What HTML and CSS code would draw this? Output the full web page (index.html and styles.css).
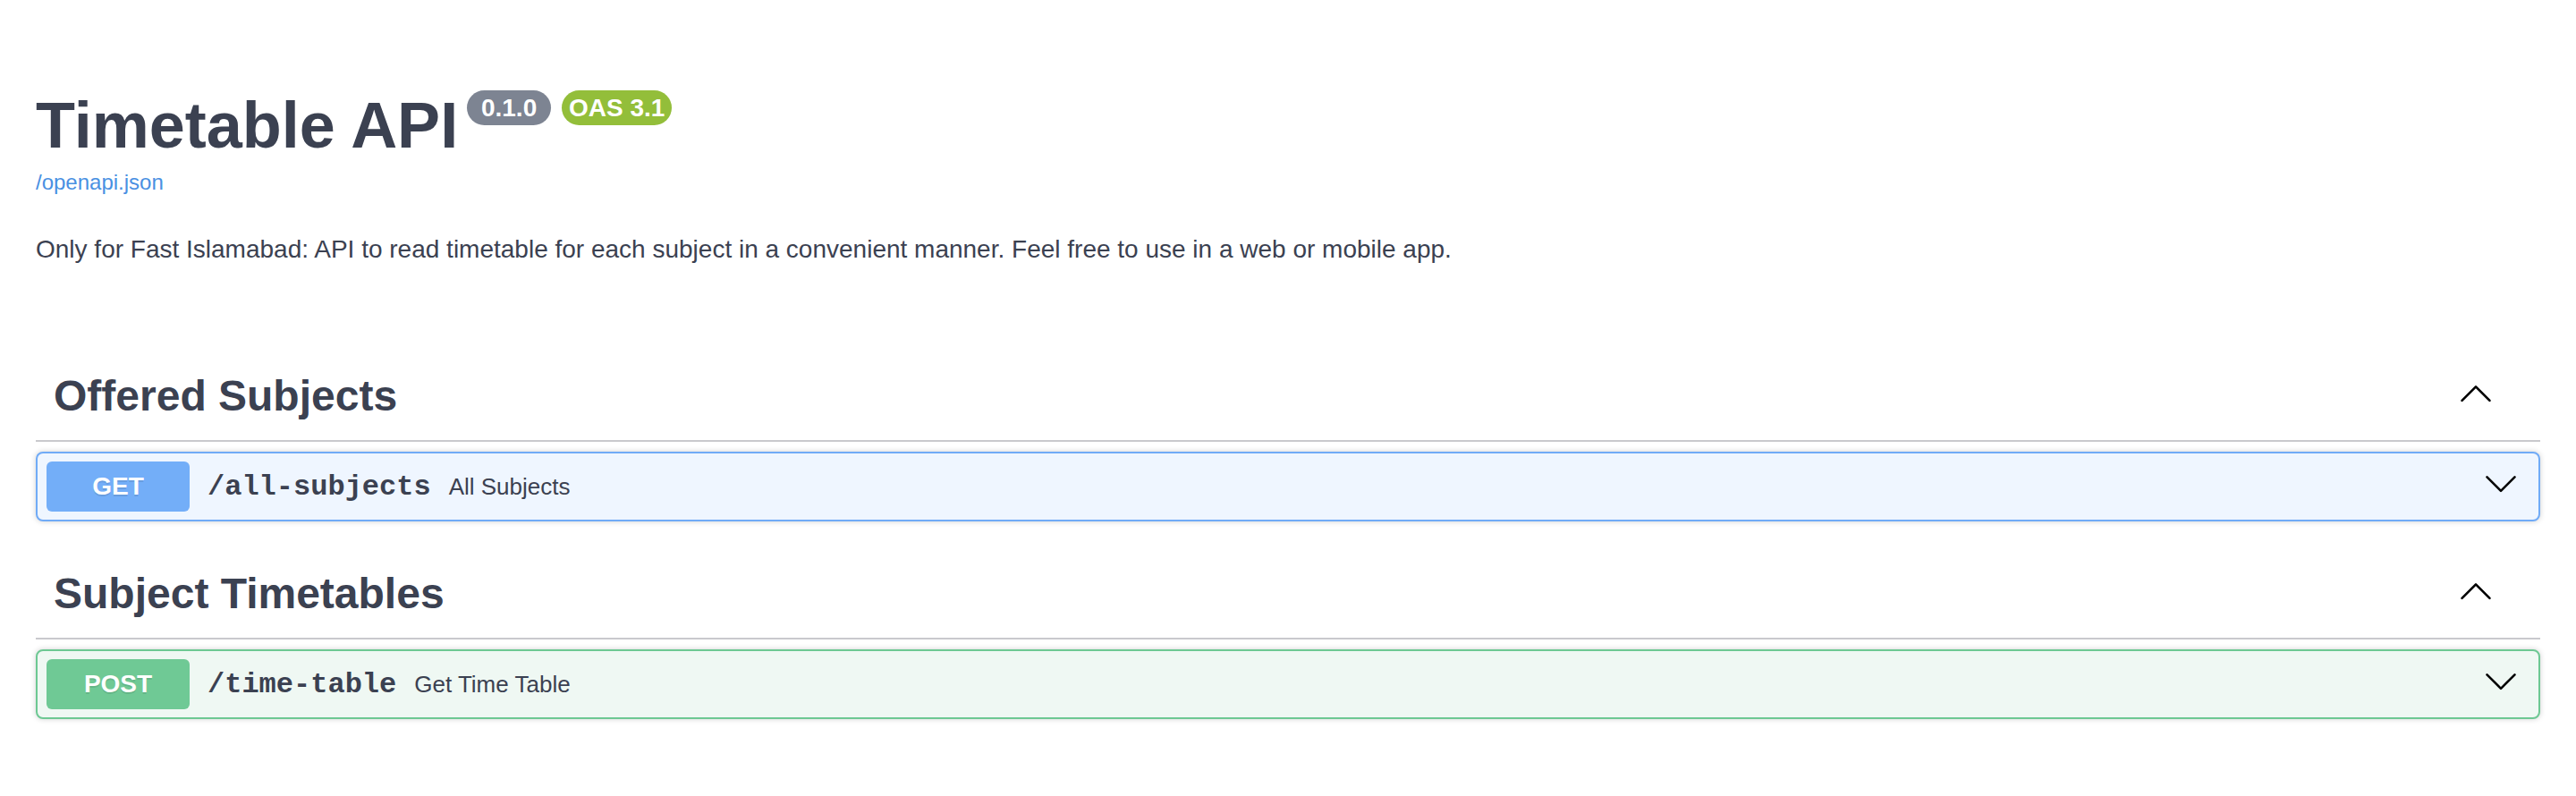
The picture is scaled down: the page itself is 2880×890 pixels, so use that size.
FILE: index.html
```html
<!DOCTYPE html>
<html lang="en">
<head>
<meta charset="utf-8">
<title>Timetable API - Swagger UI</title>
<link rel="stylesheet" href="styles.css">
</head>
<body>
<div class="wrapper">
  <section class="info">
    <hgroup class="main">
      <h2 class="title">
        <span class="title-text">Timetable API</span>
        <span class="stamp stamp-version"> 0.1.0 </span>
        <span class="stamp stamp-oas">OAS 3.1</span>
      </h2>
      <a class="url" href="#">/openapi.json</a>
    </hgroup>
    <div class="description">
      <p>Only for Fast Islamabad: API to read timetable for each subject in a convenient manner. Feel free to use in a web or mobile app.</p>
    </div>
  </section>

  <section class="tag-section">
    <div class="tag-header">
      <h3 class="tag-name">Offered Subjects</h3>
      <button class="expand" type="button" aria-label="collapse">
        <svg class="arrow" width="40" height="40" viewBox="0 0 20 20" aria-hidden="true"><polyline points="2.25,13.9 10,6.15 17.75,13.9"/></svg>
      </button>
    </div>
    <div class="opblock opblock-get">
      <div class="summary">
        <span class="method">GET</span>
        <span class="path">/all-subjects</span>
        <span class="summary-desc">All Subjects</span>
        <button class="control" type="button" aria-label="expand">
          <svg class="arrow" width="40" height="40" viewBox="0 0 20 20" aria-hidden="true"><polyline points="2.25,6.15 10,13.9 17.75,6.15"/></svg>
        </button>
      </div>
    </div>
  </section>

  <section class="tag-section">
    <div class="tag-header">
      <h3 class="tag-name">Subject Timetables</h3>
      <button class="expand" type="button" aria-label="collapse">
        <svg class="arrow" width="40" height="40" viewBox="0 0 20 20" aria-hidden="true"><polyline points="2.25,13.9 10,6.15 17.75,13.9"/></svg>
      </button>
    </div>
    <div class="opblock opblock-post">
      <div class="summary">
        <span class="method">POST</span>
        <span class="path">/time-table</span>
        <span class="summary-desc">Get Time Table</span>
        <button class="control" type="button" aria-label="expand">
          <svg class="arrow" width="40" height="40" viewBox="0 0 20 20" aria-hidden="true"><polyline points="2.25,6.15 10,13.9 17.75,6.15"/></svg>
        </button>
      </div>
    </div>
  </section>
</div>
</body>
</html>
```

FILE: styles.css
```css
html, body {
  margin: 0;
  padding: 0;
  background: #ffffff;
}

body {
  font-family: "Liberation Sans", Arial, sans-serif;
  color: #3b4151;
}

.wrapper {
  max-width: 2920px;
  box-sizing: border-box;
  padding: 0 40px;
  margin: 0 auto;
}

.info {
  margin: 99px 0 97px;
}

.main {
  margin: 0 0 45px;
}

.title {
  display: flex;
  align-items: flex-start;
  margin: 0;
  font-size: 72px;
  line-height: 82px;
  font-weight: 700;
  color: #3b4151;
}

.stamp {
  display: inline-block;
  margin-top: 2px;
  padding: 4px 8px;
  border-radius: 114px;
  font-size: 28px;
  line-height: 31px;
  font-weight: 700;
  color: #ffffff;
  white-space: pre;
}

.stamp-version {
  margin-left: 10px;
  background: #7d8492;
}

.stamp-oas {
  margin-left: 12px;
  background: #93be3a;
}

.url {
  display: block;
  margin-top: 9px;
  font-size: 24px;
  line-height: 28px;
  color: #4990e2;
  text-decoration: none;
}

.description p {
  margin: 0;
  font-size: 28px;
  line-height: 32px;
  color: #3b4151;
}

.tag-section {
  display: flex;
  flex-direction: column;
}

.tag-header {
  display: flex;
  align-items: center;
  padding: 22px 40px 20px 20px;
  margin: 0 0 11px;
  border-bottom: 2px solid #c9c9cd;
}

.tag-name {
  flex: 1 1 auto;
  margin: 0;
  font-size: 48px;
  line-height: 58px;
  font-weight: 700;
  color: #3b4151;
}

.expand,
.control {
  display: flex;
  align-items: center;
  justify-content: center;
  margin: 0 0 6px;
  padding: 0 12px;
  border: none;
  background: none;
  cursor: pointer;
}

.arrow {
  display: block;
  width: 40px;
  height: 40px;
}

.arrow polyline {
  fill: none;
  stroke: #000000;
  stroke-width: 1.3;
  stroke-linecap: round;
  stroke-linejoin: round;
}

.opblock {
  margin: 0 0 30px;
  border: 2px solid #000;
  border-radius: 8px;
  box-shadow: 0 0 6px rgba(0, 0, 0, 0.19);
}

.opblock-get {
  background: #eff6ff;
  border-color: #70abf7;
}

.opblock-get .method {
  background: #73aef8;
}

.opblock-post {
  background: #eff8f3;
  border-color: #6dc893;
}

.opblock-post .method {
  background: #6fc995;
}

.summary {
  display: flex;
  align-items: center;
  padding: 9px 10px;
}

.method {
  min-width: 160px;
  padding: 12px 0;
  border-radius: 6px;
  font-size: 28px;
  line-height: 32px;
  font-weight: 700;
  text-align: center;
  color: #ffffff;
  text-shadow: 0 2px 0 rgba(0, 0, 0, 0.1);
}

.path {
  padding: 0 20px;
  font-family: "Liberation Mono", "Courier New", monospace;
  font-size: 32px;
  font-weight: 700;
  color: #3b4151;
}

.summary-desc {
  flex: 1 1 auto;
  font-size: 26px;
  color: #3b4151;
}
```
